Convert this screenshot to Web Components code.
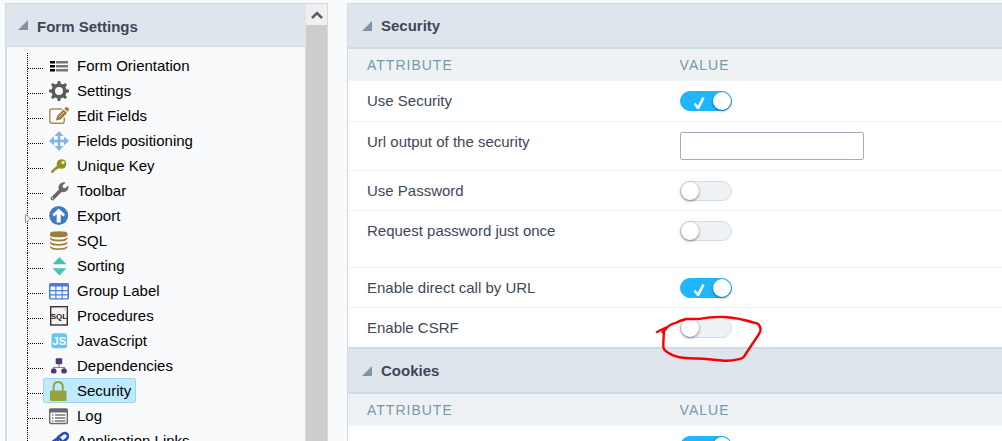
<!DOCTYPE html>
<html lang="en">
<head>
<meta charset="utf-8">
<meta name="viewport" content="width=device-width, initial-scale=1">
<title>Form Settings</title>
<style>
  :root {
    --color-border: #d1dce2;
    --color-header: #dfe5ed;
    --color-title: #3c4858;
    --color-accent: #1fb6ff;
    --color-head-row: #eff2f5;
  }
  body {
    margin: 0;
    background: #f9fafc;
    font-family: "Liberation Sans", Arial, sans-serif;
    font-size: 15px;
    line-height: 20px;
    color: #3c4858;
  }
</style>
</head>
<body>
<settings-app>
  <settings-tree slot="sidebar">
    <span slot="title">Form Settings</span>
    <tree-item icon="orientation">Form Orientation</tree-item>
    <tree-item icon="gear">Settings</tree-item>
    <tree-item icon="edit">Edit Fields</tree-item>
    <tree-item icon="move">Fields positioning</tree-item>
    <tree-item icon="key">Unique Key</tree-item>
    <tree-item icon="wrench">Toolbar</tree-item>
    <tree-item icon="export" handle>Export</tree-item>
    <tree-item icon="database">SQL</tree-item>
    <tree-item icon="sort">Sorting</tree-item>
    <tree-item icon="grid">Group Label</tree-item>
    <tree-item icon="procedure">Procedures</tree-item>
    <tree-item icon="js">JavaScript</tree-item>
    <tree-item icon="dependency">Dependencies</tree-item>
    <tree-item icon="lock" selected>Security</tree-item>
    <tree-item icon="log">Log</tree-item>
    <tree-item icon="link">Application Links</tree-item>
  </settings-tree>
  <settings-section name="security">Security</settings-section>
  <settings-section name="cookies">Cookies</settings-section>
</settings-app>

<script>
const ICONS = {
  orientation: `
    <path fill="#000" d="M1 5h5v2.500H1zM1 9h5v2.500H1zM1 13h5v2.500H1z"/>
    <path fill="#777" d="M7 5h12v2.500H7zM7 9h12v2.500H7zM7 13h12v2.500H7z"/>`,
  gear: `
    <g fill="#5a5a5a">
      <path d="M8 4l.7-4h2.6L12 4zM8 16l.7 4h2.6l.7-4z"/>
      <path transform="rotate(45 10 10)" d="M8 4l.7-4h2.6L12 4zM8 16l.7 4h2.6l.7-4z"/>
      <path transform="rotate(90 10 10)" d="M8 4l.7-4h2.6L12 4zM8 16l.7 4h2.6l.7-4z"/>
      <path transform="rotate(135 10 10)" d="M8 4l.7-4h2.6L12 4zM8 16l.7 4h2.6l.7-4z"/>
    </g>
    <circle cx="10" cy="10" r="5.8" fill="none" stroke="#5a5a5a" stroke-width="3.6"/>`,
  edit: `
    <path d="M13 3H3Q.8 3 .8 5v10q0 2.3 2.2 2.3h10q2.300 0 2.300-2.300v-3.500" fill="none" stroke="#ab8a55" stroke-width="1.400"/>
    <path fill="#a07a3c" d="M7 14.500l1-4.500 6.500-6.500 3.500 3.500-6.500 6.500zM15.300 2.700l1.400-1.400q1-.6 2 .3l1 1q.6 1-.2 1.900l-1 1.200z"/>
    <path d="M9.500 11.500L15 6" stroke="#f4ead8" stroke-width=".8"/>`,
  move: `
    <path d="M10 3v14M3 10h14" stroke="#7db5e4" stroke-width="2.400"/>
    <path fill="#7db5e4" d="M10 0l4.500 5h-9zM10 20l4.500-5h-9zM0 10l5-4.500v9zM20 10l-5-4.500v9z"/>
    <path fill="#7db5e4" d="M7 10l3-3 3 3-3 3z"/>`,
  key: `
    <path fill="#8f9319" d="M2 16.500V15l6.500-5.800 2 2.100L9 13H7.500v1.300H6l-1.500 2.400z"/>
    <circle cx="12.500" cy="8" r="4.800" fill="#8f9319"/>
    <circle cx="14" cy="6.600" r="1.500" fill="#f4f5dc"/>`,
  wrench: `
    <path d="M3.500 17.500L12 9" stroke="#686868" stroke-width="3.800" stroke-linecap="round"/>
    <path fill="#686868" d="M16.800 1.500l-3.300 3 .6 2.200 2.300.6L19.300 4.500q.8 3.600-1.600 5.600-2.300 1.700-5 .8L9.600 8q-.6-3 1.400-5.200 2.400-2.200 5.800-1.300z"/>
    <circle cx="3.600" cy="17.400" r=".8" fill="#ddd"/>`,
  export: `
    <circle cx="9.700" cy="9.500" r="9.500" fill="#3f7cbd"/>
    <path fill="#fff" d="M9.700 2.500l6.300 6-1.700 2-2.600-2.200v8.200h-4V8.300L5.100 10.500l-1.700-2z"/>`,
  database: `
    <g fill="#a07c3a">
      <path d="M1 2.500Q1 .3 9.700.3t8.700 2.200v1.700q0 2-8.700 2T1 4.200z"/>
      <path d="M1 6.300q2 2.300 8.700 2.300t8.700-2.300v1.600q-1.400 2.500-8.700 2.500T1 7.900z"/>
      <path d="M1 10.600q2 2.300 8.700 2.300t8.700-2.300v1.600q-1.400 2.500-8.700 2.500T1 12.200z"/>
      <path d="M1 14.900q2 2.300 8.700 2.300t8.700-2.300v1.600q-1.400 2.500-8.700 2.500T1 16.500z"/>
    </g>`,
  sort: `<path fill="#49c0b8" d="M10.500 1l7 7.200h-14zM10.500 19.400l-7-7.100h14z"/>`,
  grid: `
    <rect y="2" width="20" height="16.500" rx="1.500" fill="#4c7add"/>
    <path fill="#f7faff" d="M1.500 5.500h4.800V9H1.500zM7.400 5.500h5.200V9H7.400zM13.700 5.500h4.800V9h-4.800zM1.500 10.200h4.800v3H1.500zM7.400 10.200h5.200v3H7.400zM13.700 10.200h4.800v3h-4.800zM1.500 14.400h4.800v2.800H1.500zM7.400 14.400h5.200v2.800H7.400zM13.700 14.400h4.800v2.800h-4.800z"/>`,
  procedure: `
    <rect x="1.700" y=".7" width="16.600" height="18.300" fill="#f6f3f3" stroke="#3b2d30" stroke-width="1.400"/>
    <path fill="#ddd6d6" d="M13 1.400h4.600V6z"/>
    <text x="10" y="12.500" text-anchor="middle" font-size="8" font-weight="700" fill="#2b1a1e">SQL</text>`,
  js: `
    <rect x="2.500" y="2.300" width="15.500" height="15" rx="2.500" fill="#69c4f3"/>
    <text x="10.300" y="14" text-anchor="middle" font-size="11" font-weight="700" fill="#fff">JS</text>`,
  dependency: `
    <path d="M10 8v3.500M4.500 14v-2.500h11V14" fill="none" stroke="#8f7ba3" stroke-width="1.200"/>
    <rect x="6.700" y="2.300" width="6.500" height="6" rx="1" fill="#56396f"/>
    <rect x="2" y="12.600" width="5.500" height="5" rx="1.800" fill="#56396f"/>
    <rect x="12.300" y="12.600" width="5.500" height="5" rx="1.800" fill="#56396f"/>`,
  lock: `
    <path d="M4.600 11V6.500q0-5.500 4.600-5.500t4.600 5.500V11" fill="none" stroke="#98a33b" stroke-width="1.900"/>
    <rect x="1" y="9.500" width="16.500" height="10.500" rx="1" fill="#98a33b"/>`,
  log: `
    <rect x=".7" y="3.200" width="17.600" height="14.300" rx="1.200" fill="#fff" stroke="#696969" stroke-width="1.400"/>
    <path fill="#696969" d="M0 4q0-1.500 1.500-1.500h16Q19 2.500 19 4v2.500H0z"/>
    <path d="M3 9h1.500M3 12h1.500M3 15h1.500M6 9h10.500M6 12h10.500M6 15h10.500" stroke="#777" stroke-width="1.300"/>`,
  link: `
    <g fill="none" stroke="#2250b4" stroke-width="2.600">
      <rect x="8" y="3.500" width="11.500" height="6.600" rx="3.300" transform="rotate(-38 13.700 6.800)"/>
      <rect x="1.500" y="9" width="11.500" height="6.600" rx="3.300" transform="rotate(-38 7.200 12.300)"/>
    </g>`
};

const SECTIONS = {
  security: [
    { label: "Use Security", type: "switch", on: true },
    { label: "Url output of the security", type: "text" },
    { label: "Use Password", type: "switch", size: "compact" },
    { label: "Request password just once", type: "switch", size: "tall" },
    { label: "Enable direct call by URL", type: "switch", on: true, size: "compact" },
    { label: "Enable CSRF", type: "switch", marked: true }
  ],
  cookies: [
    { label: "", name: "Use cookies", type: "switch", on: true }
  ]
};

class SettingsApp extends HTMLElement {
  constructor() {
    super();
    this.attachShadow({ mode: "open" });
    this.shadowRoot.innerHTML = `
      <style>
        :host {
          box-sizing: border-box;
          display: flex;
          gap: 19px;
          height: 100vh;
          padding: 3px 0 0 5px;
          overflow: hidden;
        }
        .App__Main {
          flex: 1;
          min-width: 0;
        }
      </style>
      <slot name="sidebar"></slot>
      <main class="App__Main"><slot></slot></main>
    `;
  }
}

class SettingsTree extends HTMLElement {
  constructor() {
    super();
    this.attachShadow({ mode: "open" });
    this.shadowRoot.innerHTML = `
      <style>
        :host {
          box-sizing: border-box;
          display: flex;
          flex: 0 0 323px;
          border: 1px solid var(--color-border);
          border-bottom: 0;
          overflow: hidden;
        }
        .Tree__Body {
          flex: 1;
          min-width: 0;
        }
        .Tree__Title {
          margin: 0;
          background: var(--color-header);
          border-bottom: 1px solid var(--color-border);
          font-size: 15px;
        }
        .Tree__Toggle {
          display: flex;
          align-items: center;
          gap: 9px;
          width: 100%;
          height: 42px;
          padding: 4px 12px 0;
          border: 0;
          background: none;
          font: inherit;
          color: var(--color-title);
        }
        .Tree__Arrow {
          width: 10px;
          height: 10px;
          margin-bottom: 4px;
          fill: #8492a6;
        }
        .Tree__List {
          display: flex;
          flex-direction: column;
          padding: 6px 0 0 20px;
          border-left: 1px solid var(--color-border);
          border-right: 1px solid var(--color-border);
        }
        .Tree__Scroll {
          flex: 0 0 21px;
          background: #cdcdcd;
        }
        .Tree__ScrollUp {
          display: grid;
          place-items: center;
          width: 100%;
          height: 21px;
          padding: 0;
          border: 0;
          background: #f0f0f0;
        }
      </style>
      <nav class="Tree__Body">
        <h2 class="Tree__Title">
          <button class="Tree__Toggle" type="button">
            <svg class="Tree__Arrow" viewBox="0 0 10 10"><path d="M10 0v10H0z"/></svg>
            <slot name="title"></slot>
          </button>
        </h2>
        <div class="Tree__List"><slot></slot></div>
      </nav>
      <div class="Tree__Scroll">
        <button class="Tree__ScrollUp" type="button" aria-label="Scroll up">
          <svg width="12" height="8" viewBox="0 0 12 8"><path d="M1 7l5-5 5 5" fill="none" stroke="#606060" stroke-width="2.600"/></svg>
        </button>
      </div>
    `;
  }
}

class TreeItem extends HTMLElement {
  constructor() {
    super();
    this.attachShadow({ mode: "open" });
    this.shadowRoot.innerHTML = `
      <style>
        :host {
          position: relative;
          display: flex;
          height: 25px;
          border-left: 1px dotted #000;
          line-height: 25px;
        }
        .Item__Branch {
          width: 15px;
          height: 15px;
          border-bottom: 1px dotted #000;
        }
        .Item__Link {
          box-sizing: border-box;
          display: flex;
          align-items: center;
          gap: 8px;
          height: 25px;
          padding: 0 4px 0 5px;
          border: 1px solid transparent;
          border-radius: 2px;
          color: #000;
          text-decoration: none;
        }
        :host([selected]) .Item__Link {
          background: #beebff;
          border-color: #a2d4e8;
        }
        .Item__Icon {
          width: 20px;
          height: 20px;
        }
        .Item__Handle {
          position: absolute;
          left: -3px;
          top: 10px;
          display: none;
        }
        :host([handle]) .Item__Handle {
          display: block;
        }
      </style>
      <span class="Item__Branch"></span>
      <a class="Item__Link" href="#">
        <svg class="Item__Icon" viewBox="0 0 20 20" aria-hidden="true">${ICONS[this.getAttribute("icon")]}</svg>
        <slot></slot>
      </a>
      <svg class="Item__Handle" width="6" height="11" viewBox="0 0 6 11"><path d="M.5 1v9L5 5.500z" fill="#f9fafc" stroke="#999"/></svg>
    `;
  }
}

class SettingsSection extends HTMLElement {
  constructor() {
    super();
    this.attachShadow({ mode: "open" });
    this.shadowRoot.innerHTML = `
      <style>
        :host {
          display: block;
          border-left: 1px solid var(--color-border);
          border-top: 1px solid var(--color-border);
        }
        :host([name="cookies"]) {
          border-top-width: 2px;
        }
        .Section__Title {
          margin: 0;
          background: var(--color-header);
          border-bottom: 2px solid var(--color-border);
          font-size: 15px;
        }
        .Section__Toggle {
          display: flex;
          align-items: center;
          gap: 9px;
          width: 100%;
          height: 43px;
          padding: 0 14px;
          border: 0;
          background: none;
          font: inherit;
          color: var(--color-title);
        }
        .Section__Arrow {
          width: 10px;
          height: 10px;
          fill: #8492a6;
        }
      </style>
      <h2 class="Section__Title">
        <button class="Section__Toggle" type="button">
          <svg class="Section__Arrow" viewBox="0 0 10 10"><path d="M10 0v10H0z"/></svg>
          <slot></slot>
        </button>
      </h2>
      <attribute-table name="${this.getAttribute("name")}"></attribute-table>
    `;
  }
}

class AttributeTable extends HTMLElement {
  connectedCallback() {
    if (this.shadowRoot) return;
    this.attachShadow({ mode: "open" });
    const rows = SECTIONS[this.getAttribute("name")];
    this.shadowRoot.innerHTML = `
      <style>
        :host {
          display: block;
        }
        .Table {
          width: 100%;
          border-collapse: separate;
          border-spacing: 0;
          table-layout: fixed;
          background: #fff;
        }
        .Table__Head {
          height: 32px;
          padding: 0 19px;
          background: var(--color-head-row);
          border-bottom: 1px solid #f2f5f7;
          font-size: 14px;
          font-weight: 400;
          letter-spacing: 1px;
          text-align: left;
          color: #7599a9;
        }
        .Table__Head:first-child {
          width: 47.8%;
        }
        .Table__Head,
        .Table__Cell {
          box-sizing: border-box;
        }
        .Table__Cell {
          padding: 10px 19px;
          border-bottom: 1px solid #eff2f7;
          vertical-align: top;
          position: relative;
        }
        .Table__Row--compact .Table__Cell {
          padding-bottom: 9px;
        }
        .Table__Row--tall .Table__Cell {
          height: 57px;
        }
        .Table__Row:last-child .Table__Cell {
          padding-bottom: 9px;
          border-bottom: 0;
        }
        label {
          display: block;
        }
        .Switch {
          appearance: none;
          box-sizing: border-box;
          position: relative;
          display: block;
          width: 52px;
          height: 20px;
          margin: 0;
          background: #eff2f5;
          border: 1px solid #d3dce0;
          border-radius: 10px;
        }
        .Switch::before {
          content: "";
          display: block;
          width: 18px;
          height: 18px;
          border-radius: 50%;
          background: #fff;
          box-shadow: 0 1px 3px rgba(0, 0, 0, 0.5);
        }
        .Switch:checked {
          background: var(--color-accent);
          border-color: var(--color-accent);
        }
        .Switch:checked::before {
          margin-left: auto;
        }
        .Switch:checked::after {
          content: "";
          position: absolute;
          left: 13px;
          top: 5px;
          width: 11px;
          height: 12px;
          background: #fff;
          clip-path: polygon(0 58%, 18% 50%, 38% 72%, 80% 0, 100% 8%, 50% 100%, 32% 100%);
        }
        .TextBox {
          box-sizing: border-box;
          display: block;
          width: 184px;
          height: 28px;
          margin: 0;
          padding: 0 8px;
          background: #fff;
          border: 1px solid #a5adba;
          border-radius: 2px;
          font: inherit;
        }
        .Mark {
          position: absolute;
          left: -7px;
          top: 2px;
          z-index: 1;
          pointer-events: none;
        }
      </style>
      <table class="Table">
        <thead>
          <tr>
            <th class="Table__Head" scope="col">ATTRIBUTE</th>
            <th class="Table__Head" scope="col">VALUE</th>
          </tr>
        </thead>
        <tbody>${rows.map((row, i) => this.renderRow(row, i)).join("")}</tbody>
      </table>
    `;
  }

  renderRow(row, i) {
    const id = `field-${i}`;
    const aria = row.name ? `aria-label="${row.name}"` : "";
    const label = row.label ? `<label for="${id}">${row.label}</label>` : "";
    const control = row.type === "text"
      ? `<input class="TextBox" type="text" id="${id}">`
      : `<input class="Switch" type="checkbox" role="switch" id="${id}" ${aria} ${row.on ? "checked" : ""}>`;
    return `
      <tr class="Table__Row Table__Row--${row.size || "normal"}">
        <td class="Table__Cell">${label}</td>
        <td class="Table__Cell">${control}${row.marked ? this.renderMark() : ""}</td>
      </tr>`;
  }

  // hand-drawn loop around the control
  renderMark() {
    return `
      <svg class="Mark" width="110" height="56" viewBox="0 0 110 56" aria-hidden="true">
        <path d="M3 22L8 19.500 12 17.500 10.500 19Q9.500 25 9.300 36q0 4 4 6.200 4.700 3.300 11 4.800 8 1.500 25 1.700L68 50.500q8 .8 16-1.200 5-.3 7-4.300L105 24q2-3 1.500-5-.5-6-7-6.500Q85 8 71 7q-14-.5-24 1.700-9 .3-15 .3-6 1.500-10 3.800-7 1.500-10 6l-3.500 3.500" fill="none" stroke="#f90000" stroke-width="2.400" stroke-linecap="round" stroke-linejoin="round"/>
      </svg>`;
  }
}

customElements.define("attribute-table", AttributeTable);
customElements.define("settings-section", SettingsSection);
customElements.define("tree-item", TreeItem);
customElements.define("settings-tree", SettingsTree);
customElements.define("settings-app", SettingsApp);
</script>
</body>
</html>
